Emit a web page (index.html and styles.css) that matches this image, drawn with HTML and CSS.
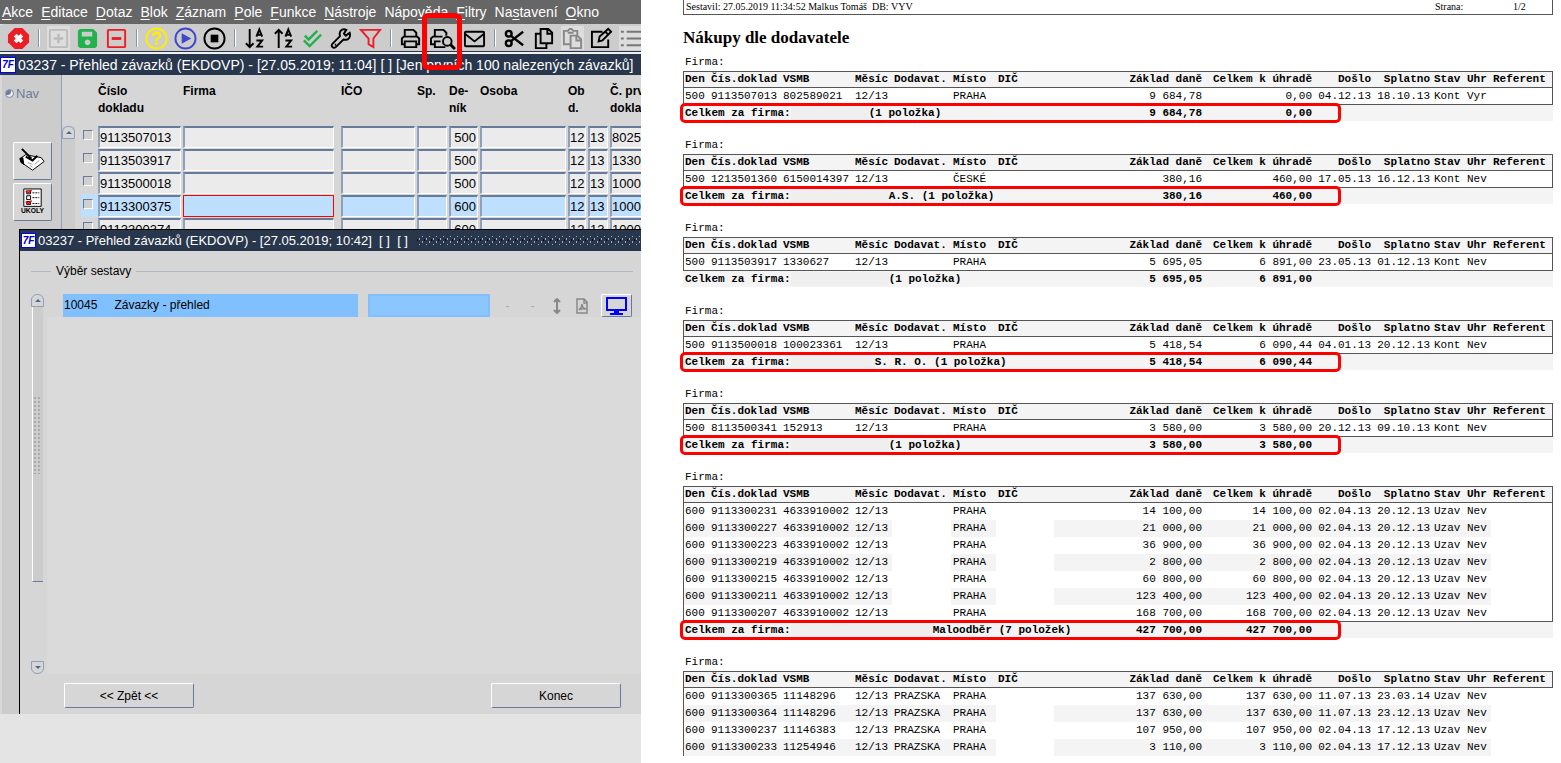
FILE: index.html
```html
<!DOCTYPE html>
<html lang="cs">
  <head>
    <meta charset="UTF-8">
    <title>Přehled závazků</title>
    <link rel="stylesheet" href="styles.css">
  </head>
  <body>
    <div id="app">
      <nav class="menu">
        <a href="#"><u>A</u>kce</a>
        <a href="#"><u>E</u>ditace</a>
        <a href="#"><u>D</u>otaz</a>
        <a href="#"><u>B</u>lok</a>
        <a href="#"><u>Z</u>áznam</a>
        <a href="#"><u>P</u>ole</a>
        <a href="#"><u>F</u>unkce</a>
        <a href="#"><u>N</u>ástroje</a>
        <a href="#">Nápo<u>v</u>ěda</a>
        <a href="#"><u>F</u>iltry</a>
        <a href="#">Na<u>s</u>tavení</a>
        <a href="#"><u>O</u>kno</a>
      </nav>

      <div class="toolbar">
        <button aria-label="Zavřít"><svg viewBox="0 0 24 24"><path d="M8 1h8l7 7v8l-7 7H8l-7-7V8z" fill="#ee1c24"/><path d="M8.500 8.500l7 7M15.500 8.500l-7 7" stroke="#fff" stroke-width="4"/></svg></button>
        <i class="sep"></i>
        <button class="off" aria-label="Nový"><svg viewBox="0 0 24 24" fill="none" stroke="#bbb" stroke-width="2"><rect x="3" y="3" width="18" height="18" rx="1"/><path d="M12 7v10M7 12h10" stroke-width="2.500"/></svg></button>
        <button aria-label="Uložit"><svg viewBox="0 0 24 24"><path fill="#22b14c" fill-rule="evenodd" d="M4 2h14l4 4v14l-2 2H4l-2-2V4zM6 5v5h11V5zM12 13a3 3 0 1 0 .1 0z"/></svg></button>
        <button aria-label="Smazat"><svg viewBox="0 0 24 24" fill="none" stroke="#ee1c24" stroke-width="2"><rect x="3" y="3" width="18" height="18" rx="1"/><path d="M7 12h10" stroke-width="3"/></svg></button>
        <i class="sep"></i>
        <button aria-label="Dotaz"><svg viewBox="0 0 24 24" fill="none" stroke="#ffec00" stroke-width="2"><circle cx="12" cy="12" r="10.500"/><path d="M8.500 9.500q0-3.500 3.500-3.500t3.500 3q0 2-3.500 4v1.500" stroke-width="2.500"/><path d="M12 16v2.500" stroke-width="3"/></svg></button>
        <button aria-label="Spustit"><svg viewBox="0 0 24 24"><circle cx="12" cy="12" r="10.500" fill="none" stroke="#3f48cc" stroke-width="2"/><path d="M8 6.500l10 5.500-10 5.500z" fill="#3f48cc"/></svg></button>
        <button aria-label="Zastavit"><svg viewBox="0 0 24 24"><circle cx="12" cy="12" r="10.500" fill="none" stroke="#000" stroke-width="2"/><path d="M8 8h8v8H8z"/></svg></button>
        <i class="sep"></i>
        <button aria-label="Seřadit vzestupně"><svg viewBox="0 0 24 24" fill="none" stroke="#000" stroke-width="2"><path d="M7 2v19M3 17l4 4 4-4"/><path d="M14 10l3-7.500 3 7.500M15 8h4M14 14h6l-5 6.500h6"/></svg></button>
        <button aria-label="Seřadit sestupně"><svg viewBox="0 0 24 24" fill="none" stroke="#000" stroke-width="2"><path d="M7 22V3M3 7l4-4 4 4"/><path d="M14 10l3-7.500 3 7.500M15 8h4M14 14h6l-5 6.500h6"/></svg></button>
        <button aria-label="Potvrdit"><svg viewBox="0 0 24 24" fill="none" stroke="#22b14c" stroke-width="2.500"><path d="M4 9l4 4 9-9M3 14l6 6L21 8"/></svg></button>
        <button aria-label="Nástroje"><svg viewBox="0 0 24 24" fill="none" stroke="#000" stroke-width="2"><path d="M20.500 6l-4 3-2-2 2.500-4c-5-2-8 2-6.500 6.500l-8 8c-2 2.500 1 5.500 3.500 3.500l8-8c5 1.500 8-2.500 6.500-7z"/><path d="M5 18.500h1.500"/></svg></button>
        <button aria-label="Filtr"><svg viewBox="0 0 24 24" fill="none" stroke="#ee1c24" stroke-width="2"><path d="M2 3h20l-7 9v9l-5-3v-6z"/></svg></button>
        <i class="sep"></i>
        <button aria-label="Tisk"><svg viewBox="0 0 24 24" fill="none" stroke="#000" stroke-width="2"><path d="M6 10V3h9l3 3v4M6 18H3v-6l2-2h14l2 2v6h-3M6 15h12v6H6z"/></svg></button>
        <button class="wide" aria-label="Náhled tisku"><svg viewBox="0 0 28 24" fill="none" stroke="#000" stroke-width="2"><path d="M6 10V3h9l3 3v3M6 18H2v-6l2-2h10M12 15H6v6h11"/><circle cx="19" cy="15" r="4.500"/><path d="M22 18l5 5" stroke-width="3"/></svg><span class="mark"></span></button>
        <button aria-label="Pošta"><svg viewBox="0 0 24 24" fill="none" stroke="#000" stroke-width="2"><rect x="2" y="5" width="20" height="15" rx="1"/><path d="M2 7l10 8 10-8"/></svg></button>
        <i class="sep"></i>
        <button aria-label="Vyjmout"><svg viewBox="0 0 24 24" fill="none" stroke="#000" stroke-width="2.500"><circle cx="6" cy="7" r="3"/><circle cx="6" cy="17" r="3"/><path d="M8 9l13 10M8 15L21 5"/></svg></button>
        <button aria-label="Kopírovat"><svg viewBox="0 0 24 24" fill="none" stroke="#000" stroke-width="2"><path d="M9 2h8l4 4v11H9zM9 7H4v15h11v-5M16 2v5h5"/></svg></button>
        <button class="off" aria-label="Vložit"><svg viewBox="0 0 24 24" fill="none" stroke="#888" stroke-width="2"><path d="M9 18H3V4h4l2-2h2l2 2h4v4M7 6h6M10 9h7l4 4v9H10zM16 9v5h5"/></svg></button>
        <button aria-label="Upravit"><svg viewBox="0 0 24 24" fill="none" stroke="#000" stroke-width="2"><path d="M13 5H2v16h17v-8M9 15l1-5 9-8 3 3-9 9zM16 5l3 3"/></svg></button>
        <button class="off" aria-label="Seznam"><svg viewBox="0 0 24 24" fill="none" stroke="#777" stroke-width="2"><path d="M2 5h3M2 12h3M2 19h3M8 5h16M8 12h16M8 19h16"/></svg></button>
      </div>

      <div class="window">
        <div class="title"><b class="logo">7F</b><span>03237 - Přehled závazků (EKDOVP) - [27.05.2019; 11:04] [ ] [Jen prvních 100 nalezených závazků]</span></div>
        <div class="form">
          <div class="side">
            <label><input type="radio" name="nav"> Nav</label>
            <button aria-label="Poznámka"><svg viewBox="0 0 30 28"><path d="M2 12l6-4 16 3 3 4-12 9-10-7z" fill="#fff" stroke="#000" stroke-width="1"/><path d="M2 12q0 5 4 6l-1-7z" stroke="#000"/><path d="M4 2l10 10M8 10l7 4 5-5" stroke="#000" stroke-width="2" fill="none"/><path d="M10 16l5 2M17 18l5-4M12 19l3 2" stroke="#999"/></svg></button>
            <button aria-label="Úkoly"><svg viewBox="0 0 30 28"><path d="M6 1h18v18H6z" fill="#fff" stroke="#000"/><path d="M9 3h4v3H9zM9 8h4v4H9zM9 14h4v3H9z" fill="none" stroke="#000"/><path d="M15 5h7M15 10h7M15 16h7" stroke="#000" stroke-dasharray="2 1"/><path d="M8 3l3 2 3-3M8 14l3 2 3-3" fill="none" stroke="#e00" stroke-width="1.500"/><text x="15" y="26" text-anchor="middle">UKOLY</text></svg></button>
          </div>
          <div class="scroll"><button class="up" aria-label="Nahoru"></button></div>
          <table class="grid">
            <colgroup><col class="g-chk"><col class="g-doc"><col class="g-firma"><col class="g-ico"><col class="g-sp"><col class="g-den"><col class="g-osoba"><col class="g-ob"><col class="g-d"><col class="g-prv"></colgroup>
            <thead>
              <tr><th></th><th>Číslo<br>dokladu</th><th>Firma</th><th>IČO</th><th>Sp.</th><th>De-<br>ník</th><th>Osoba</th><th colspan="2">Ob<br>d.</th><th>Č. prv.<br>dokladu</th></tr>
            </thead>
            <tbody id="grid"></tbody>
          </table>
        </div>

        <div class="dialog">
          <div class="title small"><b class="logo">7F</b><span>03237 - Přehled závazků (EKDOVP) - [27.05.2019; 10:42]&nbsp; [ ]&nbsp; [ ]</span><i class="dots"></i></div>
          <fieldset>
            <legend>Výběr sestavy</legend>
            <div class="pick">
              <div class="bar"><button class="up" aria-label="Nahoru"></button><div class="thumb"></div><button class="down" aria-label="Dolů"></button></div>
              <div class="list">
                <div class="item">
                  <div class="name"><span>10045</span><span>Závazky - přehled</span></div>
                  <div class="param"></div>
                  <span class="dash">-</span>
                  <span class="dash">-</span>
                  <svg class="ico" viewBox="0 0 16 16" fill="none" stroke="#888" stroke-width="2"><path d="M8 2v12M5 4l3-3 3 3M5 12l3 3 3-3"/></svg>
                  <svg class="ico" viewBox="0 0 16 16" fill="none" stroke="#888"><path d="M3 1h7l3 3v11H3zM10 1v4h3M5 12q3-3 3-6 0 4 4 5-4-1-7 1" stroke-width="1.500"/></svg>
                  <button class="screen" aria-label="Obrazovka"><svg viewBox="0 0 24 20"><path d="M2 2h19v12H2z" fill="none" stroke="#00f" stroke-width="2"/><path d="M9 15h5v2h4v2H5v-2h4z" fill="#00f"/></svg></button>
                </div>
                <div class="empty"></div>
              </div>
            </div>
          </fieldset>
          <div class="buttons">
            <button>&lt;&lt; Zpět &lt;&lt;</button>
            <button>Konec</button>
          </div>
        </div>
      </div>
    </div>

    <div id="report">
      <div class="head"><span>Sestavil: 27.05.2019 11:34:52 Malkus Tomáš&nbsp; DB: VYV</span><span class="page">Strana:</span><span class="num">1/2</span></div>
      <h1>Nákupy dle dodavatele</h1>
      <div id="groups"></div>
    </div>

    <script>
      var docs = [
        ['9113507013', '500', '80258'],
        ['9113503917', '500', '13306'],
        ['9113500018', '500', '10002'],
        ['9113300375', '600', '10006'],
        ['9113300374', '600', '10006']
      ];

      // den, doklad, vsmb, měsíc, dodavatel, místo, dič, základ, celkem, došlo, splatno, stav, uhr
      var groups = [
        { rows: ['500|9113507013|802589021|12/13||PRAHA||9 684,78|0,00|04.12.13|18.10.13|Kont|Vyr'],
          mask: 'm1', note: '(1 položka)', sum: ['9 684,78', '0,00'], mark: true },
        { rows: ['500|1213501360|6150014397|12/13||ČESKÉ||380,16|460,00|17.05.13|16.12.13|Kont|Nev'],
          mask: 'm3', note: 'A.S. (1 položka)', sum: ['380,16', '460,00'], mark: true },
        { rows: ['500|9113503917|1330627|12/13||PRAHA||5 695,05|6 891,00|23.05.13|01.12.13|Kont|Nev'],
          mask: 'm3', note: '(1 položka)', sum: ['5 695,05', '6 891,00'], mark: false },
        { rows: ['500|9113500018|100023361|12/13||PRAHA||5 418,54|6 090,44|04.01.13|20.12.13|Kont|Nev'],
          mask: 'm2', note: 'S. R. O. (1 položka)', sum: ['5 418,54', '6 090,44'], mark: true },
        { rows: ['500|8113500341|152913|12/13||PRAHA||3 580,00|3 580,00|20.12.13|09.10.13|Kont|Nev'],
          mask: 'm3', note: '(1 položka)', sum: ['3 580,00', '3 580,00'], mark: true },
        { rows: [
            '600|9113300231|4633910002|12/13||PRAHA||14 100,00|14 100,00|02.04.13|20.12.13|Uzav|Nev',
            '600|9113300227|4633910002|12/13||PRAHA||21 000,00|21 000,00|02.04.13|20.12.13|Uzav|Nev',
            '600|9113300223|4633910002|12/13||PRAHA||36 900,00|36 900,00|02.04.13|20.12.13|Uzav|Nev',
            '600|9113300219|4633910002|12/13||PRAHA||2 800,00|2 800,00|02.04.13|20.12.13|Uzav|Nev',
            '600|9113300215|4633910002|12/13||PRAHA||60 800,00|60 800,00|02.04.13|20.12.13|Uzav|Nev',
            '600|9113300211|4633910002|12/13||PRAHA||123 400,00|123 400,00|02.04.13|20.12.13|Uzav|Nev',
            '600|9113300207|4633910002|12/13||PRAHA||168 700,00|168 700,00|02.04.13|20.12.13|Uzav|Nev'
          ],
          mask: 'm4', note: 'Maloodběr (7 položek)', sum: ['427 700,00', '427 700,00'], mark: true },
        { rows: [
            '600|9113300365|11148296|12/13|PRAZSKA|PRAHA||137 630,00|137 630,00|11.07.13|23.03.14|Uzav|Nev',
            '600|9113300364|11148296|12/13|PRAZSKA|PRAHA||137 630,00|137 630,00|11.07.13|23.12.13|Uzav|Nev',
            '600|9113300237|11146383|12/13|PRAZSKA|PRAHA||107 950,00|107 950,00|02.04.13|17.12.13|Uzav|Nev',
            '600|9113300233|11254946|12/13|PRAZSKA|PRAHA||3 110,00|3 110,00|02.04.13|17.12.13|Uzav|Nev'
          ], open: true }
      ];
      var heads = ['Den', 'Čís.doklad', 'VSMB', 'Měsíc', 'Dodavat.', 'Místo', 'DIČ', 'Základ daně', 'Celkem k úhradě', 'Došlo', 'Splatno', 'Stav', 'Uhr', 'Referent'];

      function cells (list, tag) {
        var out = '';
        for (var i = 0; i < list.length; i++) {
          var cls = i >= 7 && i <= 10 ? ' class="r"' : '';
          if (!list[i]) cls = ' class="blank"';
          out += '<' + tag + cls + '>' + list[i] + '</' + tag + '>';
        }
        return out;
      }

      function field (label, value, cls) {
        return '<td><input type="text" aria-label="' + label + '" value="' + value + '" class="' + (cls || '') + '"></td>';
      }

      var html = '';
      for (var i = 0; i < docs.length; i++) {
        html += '<tr' + (i === 3 ? ' class="on"' : '') + '><td><input type="checkbox" aria-label="Vybrat"></td>' +
          field('Číslo dokladu', docs[i][0]) + field('Firma', '', 'firma') + field('IČO', '') +
          field('Sp.', '') + field('Deník', docs[i][1], 'r') + field('Osoba', '') +
          field('Období', '12') + field('Rok', '13') + field('Č. prv. dokladu', docs[i][2]) + '</tr>';
      }
      document.getElementById('grid').innerHTML = html;

      html = '';
      var cols = '';
      for (var c = 1; c <= 14; c++) cols += '<col class="c' + c + '">';
      groups.forEach(function (g) {
        html += '<table class="' + (g.open ? 'open' : '') + '"><caption>Firma:</caption><colgroup>' + cols + '</colgroup>';
        html += '<thead><tr>' + cells(heads, 'th') + '</tr></thead><tbody>';
        g.rows.forEach(function (row) {
          html += '<tr>' + cells((row + '|').split('|'), 'td') + '</tr>';
        });
        html += '</tbody>';
        if (g.sum) {
          html += '<tfoot><tr class="' + (g.mark ? 'marked' : '') + '"><td colspan="7">Celkem za firma:<span class="mask ' + g.mask + '"></span>' + g.note + '</td>' +
            '<td class="r">' + g.sum[0] + '</td><td class="r">' + g.sum[1] + '</td><td colspan="5"></td></tr></tfoot>';
        }
        html += '</table>';
      });
      document.getElementById('groups').innerHTML = html;
    </script>
  </body>
</html>
```
FILE: styles.css
```css
* {
  box-sizing: border-box;
  margin: 0;
  padding: 0;
}

body {
  display: grid;
  grid-template-columns: 641fr 920fr;
  height: 100vh;
  overflow: hidden;
  background-color: #fff;
  font-family: "Liberation Sans", Arial, sans-serif;
}

button {
  background: none;
  border: 0;
  font-family: inherit;
}

#app {
  min-width: 0;
  overflow: hidden;
  background-color: #e4e4e4;
}

/* menu + toolbar */

.menu {
  display: flex;
  gap: 8px;
  height: 24px;
  padding-left: 2px;
  background-color: #666;
  font-size: 14px;
  line-height: 24px;
}

.menu a {
  color: #fff;
  text-decoration: none;
}

.menu u {
  text-underline-offset: 2px;
}

.toolbar {
  display: flex;
  align-items: center;
  height: 30px;
  padding-left: 4px;
  background-color: #ccc;
  border-bottom: 2px solid #f0f0f0;
  box-shadow: inset 0 -1px #29374d;
  border-top-left-radius: 4px;
}

.toolbar button {
  position: relative;
  flex: 0 0 29px;
  height: 24px;
  padding: 0 3px;
}

.toolbar button.wide {
  flex-basis: 35px;
}

.toolbar svg {
  display: block;
  width: 100%;
  height: 23px;
}

.toolbar .off {
  background-color: #ddd;
  background-clip: content-box;
}

.sep {
  flex: 0 0 11px;
  height: 18px;
  background: linear-gradient(90deg, #8695ab 50%, #fff 50%) center / 2px 100% no-repeat;
}

.mark {
  position: absolute;
  top: -13px;
  left: -3px;
  width: 40px;
  height: 57px;
  border: 5px solid #f00;
  border-radius: 6px;
  z-index: 2;
}

/* windows */

.window {
  background-color: #ccc;
  border-left: 2px solid #d8d8d8;
}

.title {
  display: flex;
  align-items: center;
  gap: 2px;
  height: 21px;
  margin-left: -2px;
  background-color: #29374d;
  color: #fff;
  font-size: 14px;
  white-space: nowrap;
  overflow: hidden;
}

.logo {
  width: 16px;
  height: 16px;
  background-color: #fff;
  border: 1px solid #00f;
  color: #00c;
  font-size: 10px;
  font-style: italic;
  line-height: 14px;
  text-align: center;
}

.form {
  display: flex;
  height: 154px;
  overflow: hidden;
  background-color: #d6d6d6;
}

.side {
  flex: 0 0 59px;
  padding: 8px 9px 0 11px;
  background-color: #ccc;
  border-right: 1px solid #8ea0bb;
}

.side label {
  display: flex;
  align-items: center;
  gap: 2px;
  height: 18px;
  margin: 1px 0 40px -8px;
  color: #6c7d98;
  font-size: 13px;
}

.side input {
  appearance: none;
  width: 9px;
  height: 9px;
  border: 1px solid #8ea0bb;
  border-radius: 50%;
  background-color: #6c7d98;
  box-shadow: inset -2px -2px #eee;
}

.side button {
  display: block;
  width: 39px;
  height: 38px;
  margin-bottom: 3px;
  padding: 4px;
}

.side button,
.buttons button,
.screen {
  background-color: #d6d6d6;
  border: 1px solid #fff;
  border-right-color: #667a9c;
  border-bottom-color: #667a9c;
  border-radius: 2px;
}

.side svg {
  display: block;
  width: 100%;
}

.side text {
  font-size: 7px;
  font-weight: bold;
}

.scroll {
  flex: 0 0 12px;
  margin: 51px 6px 0 0;
  background-color: #ccc;
}

.up,
.down {
  display: block;
  width: 13px;
  height: 13px;
  background-color: #d6d6d6;
  border: 1px solid #8ea0bb;
  border-radius: 6px 6px 0 0;
}

.down {
  border-radius: 0 0 6px 6px;
}

.up::before,
.down::before {
  content: "";
  display: block;
  width: 0;
  margin: auto;
  border: 3px solid transparent;
  border-top-width: 0;
  border-bottom-color: #4e668c;
}

.down::before {
  border: 3px solid transparent;
  border-bottom-width: 0;
  border-top-color: #4e668c;
}

.grid {
  flex: none;
  width: 600px;
  table-layout: fixed;
  border-spacing: 0;
}

.g-chk { width: 17px; }
.g-doc { width: 85px; }
.g-firma { width: 158px; }
.g-ico { width: 76px; }
.g-sp { width: 32px; }
.g-den { width: 31px; }
.g-osoba { width: 88px; }
.g-ob { width: 20px; }
.g-d { width: 22px; }

.grid th {
  height: 50px;
  padding: 8px 0;
  font-size: 12px;
  line-height: 17px;
  text-align: left;
  vertical-align: top;
}

.grid td {
  height: 23px;
  padding-right: 2px;
}

.grid [type=text] {
  display: block;
  width: 100%;
  height: 22px;
  background-color: #ebebeb;
  border: 1px solid #fff;
  border-top: 2px solid #667a9c;
  border-left: 2px solid #8ea0bb;
  font-family: inherit;
  font-size: 13px;
}

.grid .firma {
  width: 151px;
}

.grid .r {
  padding-right: 1px;
  text-align: right;
}

.grid .on [type=text] {
  background-color: #bfdfff;
}

.grid .on .firma {
  border: 1px solid #f00;
}

.grid [type=checkbox] {
  appearance: none;
  display: block;
  width: 10px;
  height: 10px;
  margin: 0 0 4px 2px;
  background-color: #d0d0d0;
  border: 1px solid #667a9c;
  border-right-color: #fff;
  border-bottom-color: #fff;
}

.on td:first-child {
  background-color: #bfdfff;
}

/* report picker */

.dialog {
  margin-left: 17px;
  background-color: #d6d6d6;
  border-top: 1px solid #000;
  border-left: 1px solid #000;
}

.title.small {
  margin-left: 0;
  padding-left: 1px;
  font-size: 13px;
}

.small .logo {
  width: 15px;
  height: 15px;
  line-height: 13px;
}

.dots {
  flex: 1;
  height: 9px;
  margin-left: 6px;
  background:
    radial-gradient(circle, #9fadc2 1px, transparent 1px) 0 0 / 7px 6px,
    radial-gradient(circle, #9fadc2 1px, transparent 1px) 3px 3px / 7px 6px,
    radial-gradient(circle, #000 1px, transparent 1px) 5px 1px / 7px 6px;
}

.dialog fieldset {
  margin: 12px 8px 0 11px;
  border: 0;
  border-top: 1px solid #b0b9c6;
}

.dialog legend {
  margin-left: 20px;
  padding: 0 5px;
  font-size: 12px;
  line-height: 16px;
}

.pick {
  display: flex;
  gap: 3px;
  padding-top: 15px;
  margin-right: -8px;
}

.bar {
  display: flex;
  flex-direction: column;
  flex: 0 0 13px;
  height: 380px;
}

.bar button {
  flex: none;
}

.thumb {
  width: 11px;
  height: 275px;
  margin: 0 1px auto;
  padding-top: 89px;
  background-color: #ccc;
  border-left: 1px solid #fff;
  border-bottom: 1px solid #667a9c;
}

.thumb::before {
  content: "";
  display: block;
  width: 9px;
  height: 78px;
  background: radial-gradient(circle, #aaa 1px, transparent 1px) 0 0 / 4px 4px;
}

.list {
  display: flex;
  flex: 1;
  flex-direction: column;
}

.item {
  display: flex;
  align-items: center;
  height: 23px;
  padding: 0 9px 0 16px;
}

.name {
  display: flex;
  flex: 1;
  gap: 17px;
  height: 23px;
  margin-right: 10px;
  padding-left: 1px;
  background-color: #80c0ff;
  font-size: 12px;
  line-height: 23px;
}

.param {
  width: 122px;
  height: 23px;
  margin-right: 5px;
  background-color: #8cc6ff;
  border: 2px solid #80c0ff;
}

.dash {
  width: 25px;
  color: #aaa;
  font-size: 12px;
  text-align: center;
}

.ico {
  width: 16px;
  height: 16px;
  margin: 0 5px 0 4px;
}

.screen {
  width: 31px;
  height: 23px;
  margin-left: 6px;
  padding: 0 3px;
}

.screen svg {
  display: block;
  width: 24px;
  height: 20px;
}

.empty {
  flex: 1;
  max-height: 360px;
  background-color: #dadada;
}

.buttons {
  display: flex;
  justify-content: space-between;
  padding: 9px 20px 6px 44px;
}

.buttons button {
  width: 130px;
  height: 25px;
  color: #000;
  font-size: 12px;
}

/* printed report */

#report {
  min-width: 0;
  padding: 0 8px 0 42px;
}

.head {
  display: flex;
  height: 15px;
  padding-left: 2px;
  border: 1px solid #555;
  border-top: 0;
  font: 10px/13px "Liberation Serif", "Times New Roman", serif;
}

.head .page {
  margin-left: auto;
  width: 78px;
}

.head .num {
  width: 39px;
}

h1 {
  height: 39px;
  font: bold 17px/46px "Liberation Serif", "Times New Roman", serif;
}

#groups table {
  width: 100%;
  margin-bottom: 16px;
  table-layout: fixed;
  border-spacing: 0;
  font: 11px/15px "Liberation Mono", monospace;
  white-space: nowrap;
}

#groups caption {
  height: 17px;
  padding-left: 2px;
  line-height: 17px;
  text-align: left;
}

/* c7 takes what is left */
.c1 { width: 26px; }
.c2 { width: 72px; }
.c3 { width: 72px; }
.c4 { width: 39px; }
.c5 { width: 59px; }
.c6 { width: 45px; }
.c8 { width: 150px; }
.c9 { width: 110px; }
.c10 { width: 59px; }
.c11 { width: 59px; }
.c12 { width: 33px; }
.c13 { width: 26px; }
.c14 { width: 62px; }

#groups th,
#groups td {
  height: 17px;
  padding: 0 2px;
  text-align: left;
}

#groups .r {
  text-align: right;
}

#groups th {
  border-top: 1px solid #555;
  border-bottom: 1px solid #555;
}

#groups th:first-child,
#groups tbody td:first-child {
  padding-left: 1px;
  border-left: 1px solid #555;
}

#groups th:last-child,
#groups tbody td:last-child {
  border-right: 1px solid #555;
}

#groups tbody tr:last-child td {
  border-bottom: 1px solid #555;
}

#groups thead,
#groups tfoot,
#groups tbody tr:nth-child(even) {
  background-color: #f4f4f4;
}

#groups tbody .blank {
  background-color: #fff;
}

#groups .open tbody td:last-child {
  border-right: 0;
}

#groups .open tbody tr:last-child td {
  border-bottom: 0;
}

#groups tfoot td {
  height: 16px;
  font-weight: bold;
}

.marked {
  position: relative;
}

.marked td:first-child::after {
  content: "";
  box-sizing: border-box;
  position: absolute;
  top: -2px;
  left: -3px;
  width: 76%;
  height: 20px;
  border: 3px solid #f00;
  border-radius: 5px;
}

.mask {
  display: inline-block;
  height: 14px;
  background-color: #efefef;
  vertical-align: top;
}

.m1 { width: 78px; }
.m2 { width: 84px; }
.m3 { width: 98px; }
.m4 { width: 142px; }
```
